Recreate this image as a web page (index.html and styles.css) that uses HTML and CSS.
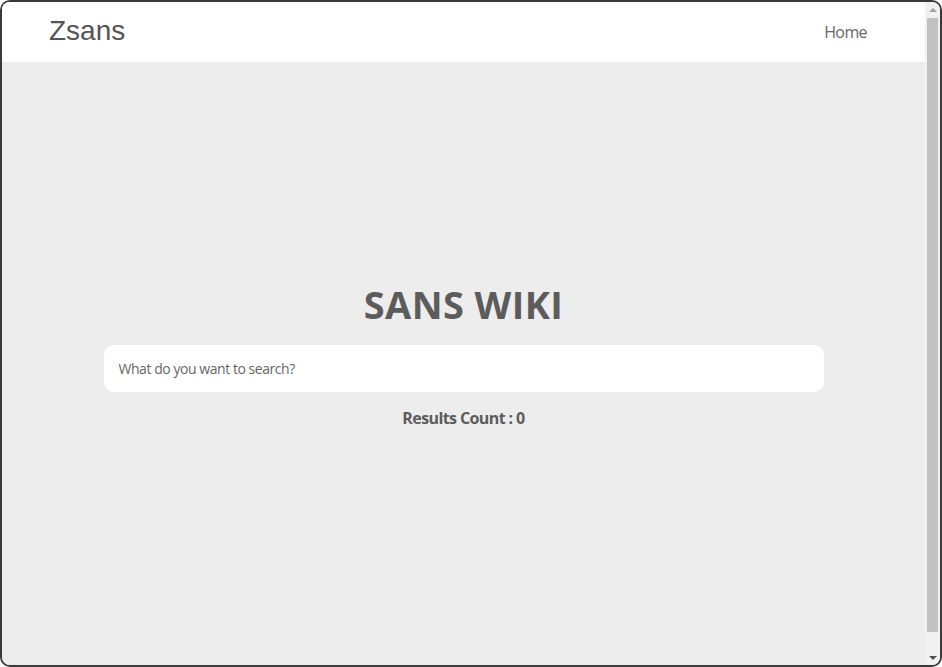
FILE: index.html
```html
<!DOCTYPE html>
<html lang="en">
<head>
<meta charset="utf-8">
<title>Zsans</title>
<link rel="stylesheet" href="styles.css">
</head>
<body>
<div class="frame">
  <div class="page">
    <header class="topbar">
      <div class="brand">Zsans</div>
      <nav class="nav"><a class="nav-link" href="#">Home</a></nav>
    </header>
    <main class="hero">
      <h1 class="title">SANS WIKI</h1>
      <input class="search" type="text" placeholder="What do you want to search?">
      <p class="count">Results Count : 0</p>
    </main>
  </div>
  <div class="scrollbar">
    <div class="arrow arrow-up"></div>
    <div class="thumb"></div>
    <div class="arrow arrow-down"></div>
  </div>
</div>
</body>
</html>
```

FILE: styles.css
```css
html, body {
  margin: 0;
  padding: 0;
  height: 100%;
  background: #ffffff;
}
body {
  font-family: "Open Sans", "Noto Sans", sans-serif;
}
.frame {
  box-sizing: border-box;
  width: 942px;
  height: 667px;
  border: 2px solid #3a3a3a;
  border-radius: 10px;
  overflow: hidden;
  display: flex;
  background: #ededed;
}
.page {
  flex: 1;
  display: flex;
  flex-direction: column;
  background: #ededed;
}
.topbar {
  height: 60px;
  flex: none;
  background: #ffffff;
  display: flex;
  align-items: center;
  justify-content: space-between;
  padding: 0 58px 0 47px;
}
.brand {
  font-family: "Liberation Sans", Arial, sans-serif;
  font-size: 28px;
  color: #555555;
  margin-top: -2px;
}
.nav-link {
  font-size: 16px;
  letter-spacing: -0.6px;
  color: #666666;
  text-decoration: none;
}
.hero {
  flex: 1;
  display: flex;
  flex-direction: column;
  align-items: center;
  justify-content: center;
  padding-bottom: 16px;
}
.title {
  margin: 0 0 17px;
  font-size: 38px;
  font-weight: 700;
  color: #5c5c5c;
  line-height: 1.2;
  letter-spacing: 0.4px;
}
.search {
  box-sizing: border-box;
  width: 720px;
  height: 47px;
  border: none;
  border-radius: 10px;
  background: #ffffff;
  padding: 0 16px 0 15px;
  font-family: inherit;
  font-size: 14px;
  letter-spacing: -0.45px;
  color: #555;
  outline: none;
}
.search::placeholder {
  color: #666666;
}
.count {
  margin: 15px 0 0;
  font-size: 16px;
  font-weight: 700;
  letter-spacing: -0.6px;
  color: #5c5c5c;
}
.scrollbar {
  width: 15px;
  flex: none;
  background: #f1f1f1;
  display: flex;
  flex-direction: column;
  align-items: center;
}
.arrow {
  width: 0;
  height: 0;
  border-left: 4px solid transparent;
  border-right: 4px solid transparent;
  flex: none;
}
.arrow-up {
  border-bottom: 4px solid #a3a3a3;
  margin: 6px 0 6px;
}
.arrow-down {
  border-top: 4px solid #505050;
  margin: 6px 0 5px;
}
.thumb {
  flex: 1;
  width: 11px;
  background: #c1c1c1;
  margin-bottom: 18px;
}
```
